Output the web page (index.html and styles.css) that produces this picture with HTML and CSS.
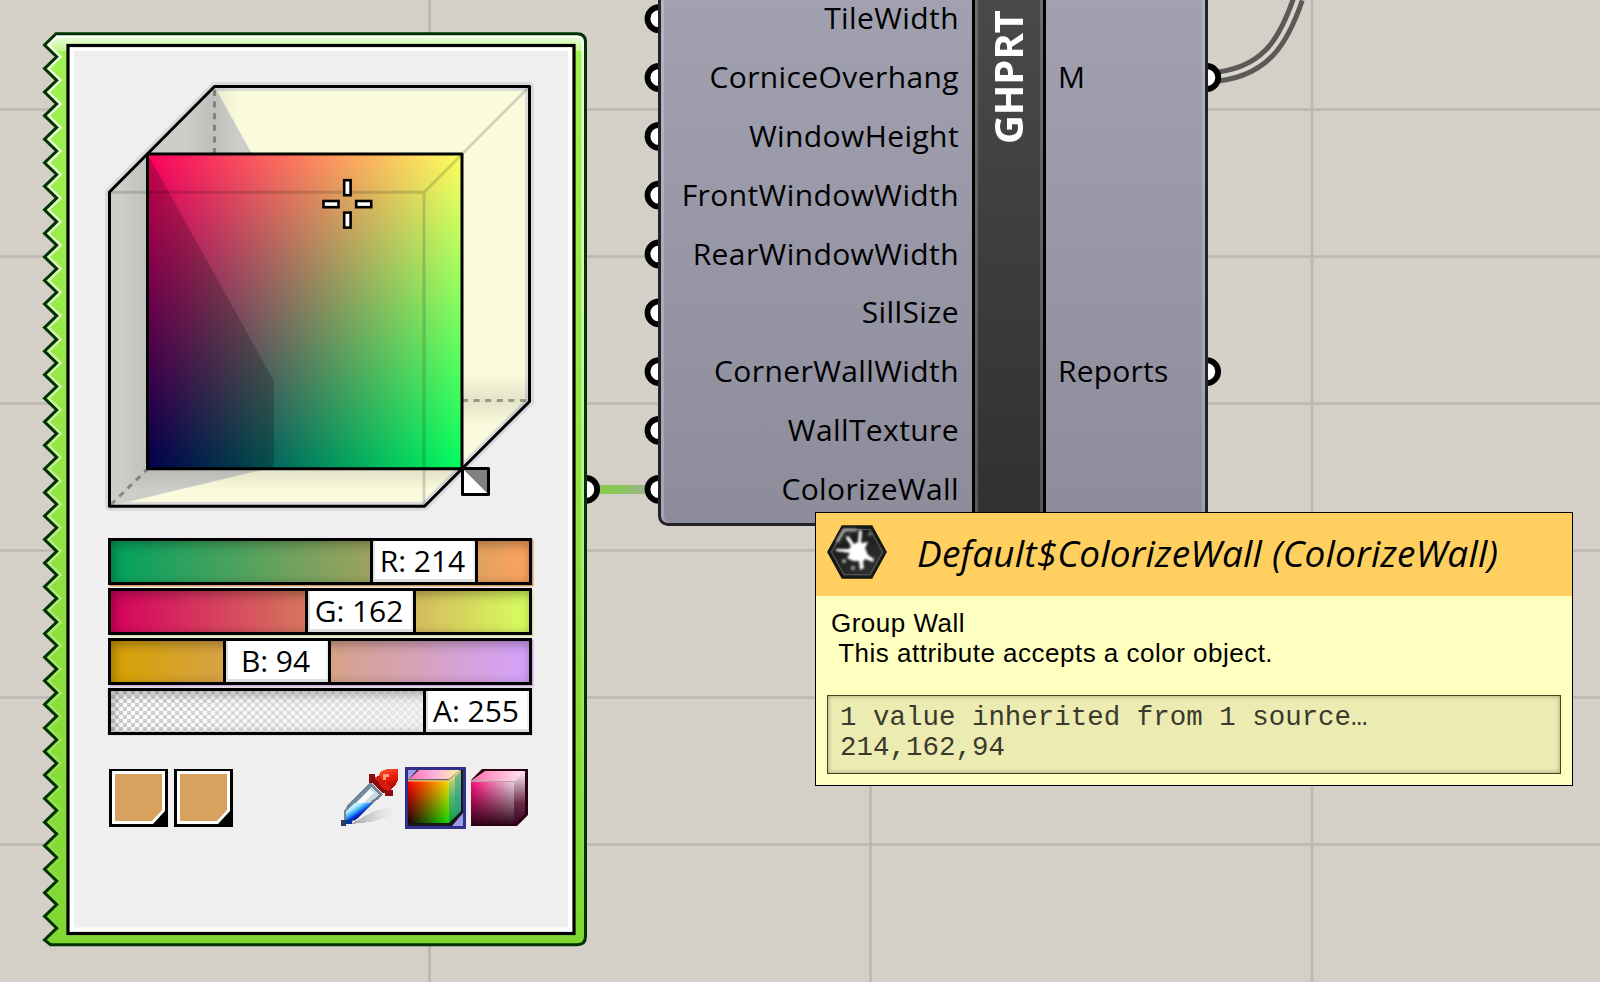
FILE: index.html
```html
<!DOCTYPE html>
<html lang="en">
<head>
<meta charset="utf-8">
<title>Colour picker canvas</title>
<link rel="stylesheet" href="styles.css">
</head>
<body>
<main class="canvas">
  <svg class="wires" viewBox="0 0 1600 982" width="1600" height="982">
    <defs>
      <linearGradient id="wire" x1="600" x2="645" gradientUnits="userSpaceOnUse"><stop offset="0" stop-color="#88c94a"/><stop offset=".5" stop-color="#8cc45c"/><stop offset="1" stop-color="#9cb58c"/></linearGradient>
    </defs>
    <path class="grid" d="M0 109.5H1600M0 256.5H1600M0 403.5H1600M0 550.5H1600M0 697.5H1600M0 844.5H1600M429.5 0V982M870.5 0V982M1312 0V982"/>
    <rect x="590" y="485" width="62" height="9" fill="url(#wire)"/>
    <path class="wire-outer" d="M1207 77.5C1266 75 1284 40 1298 -1"/>
    <path class="wire-inner" d="M1207 77.5C1266 75 1284 40 1298 -1"/>
    <g class="ports">
      <circle cx="659" cy="18.7" r="11.5"/><circle cx="659" cy="77.5" r="11.5"/><circle cx="659" cy="136.3" r="11.5"/>
      <circle cx="659" cy="195.1" r="11.5"/><circle cx="659" cy="254" r="11.5"/><circle cx="659" cy="312.8" r="11.5"/>
      <circle cx="659" cy="371.6" r="11.5"/><circle cx="659" cy="430.4" r="11.5"/><circle cx="659" cy="489.3" r="11.5"/>
      <circle cx="1206.7" cy="77.5" r="11.5"/><circle cx="1206.7" cy="371.6" r="11.5"/><circle cx="585.7" cy="489.3" r="11.5"/>
    </g>
  </svg>

  <section class="picker">
    <svg class="picker-frame" viewBox="42 30 547 918" width="547" height="918">
      <defs>
        <linearGradient id="green" x1="0" x2="0" y1="34" y2="945" gradientUnits="userSpaceOnUse"><stop offset="0" stop-color="#9ff250"/><stop offset=".5" stop-color="#92e543"/><stop offset="1" stop-color="#80d732"/></linearGradient>
        <linearGradient id="gloss" x1="0" x2="0" y1="34" y2="51" gradientUnits="userSpaceOnUse"><stop offset="0" stop-color="#fff" stop-opacity=".9"/><stop offset="1" stop-color="#fff" stop-opacity=".35"/></linearGradient>
        <linearGradient id="rim" x1="0" x2="0" y1="34" y2="945" gradientUnits="userSpaceOnUse"><stop offset="0" stop-color="#fff" stop-opacity=".85"/><stop offset="1" stop-color="#fff" stop-opacity="0"/></linearGradient>
        <clipPath id="shell"><path id="shell-path" d=""/></clipPath>
      </defs>
      <path class="shell" fill="url(#green)"/>
      <g clip-path="url(#shell)">
        <rect x="42" y="33" width="547" height="18" fill="url(#gloss)"/>
        <path class="shell" fill="none" stroke="url(#rim)" stroke-width="8"/>
      </g>
      <path class="shell" fill="none" stroke="#003300" stroke-width="3"/>
      <rect x="68" y="45.5" width="506" height="888" fill="#fff" stroke="#000" stroke-width="3.2"/>
      <rect x="74" y="51" width="494" height="876.5" fill="#efefef"/>
    </svg>

    <svg class="cube" viewBox="104 80 432 432" width="432" height="432">
      <defs>
        <linearGradient id="face-g"><stop offset="0" stop-color="#00005e"/><stop offset="1" stop-color="#00ff5e"/></linearGradient>
        <linearGradient id="face-r" x1="0" x2="0" y1="0" y2="1"><stop offset="0" stop-color="#f00"/><stop offset="1" stop-color="#000"/></linearGradient>
        <linearGradient id="shade-x" x1="120" x2="147" gradientUnits="userSpaceOnUse"><stop offset="0" stop-color="#000" stop-opacity="0"/><stop offset="1" stop-color="#000" stop-opacity=".06"/></linearGradient>
        <linearGradient id="shade-b" x1="0" x2="0" y1="469" y2="490" gradientUnits="userSpaceOnUse"><stop offset="0" stop-color="#000" stop-opacity=".1"/><stop offset="1" stop-color="#000" stop-opacity="0"/></linearGradient>
        <linearGradient id="shade-r" x1="0" x2="0" y1="375" y2="426" gradientUnits="userSpaceOnUse"><stop offset="0" stop-color="#000" stop-opacity="0"/><stop offset=".5" stop-color="#000" stop-opacity=".09"/><stop offset="1" stop-color="#000" stop-opacity="0"/></linearGradient>
        <linearGradient id="shade-t" x1="185" x2="240" gradientUnits="userSpaceOnUse"><stop offset="0" stop-color="#000" stop-opacity="0"/><stop offset=".5" stop-color="#000" stop-opacity=".07"/><stop offset="1" stop-color="#000" stop-opacity="0"/></linearGradient>
      </defs>
      <path d="M214.5 86.5H529.5V401.5L424.5 506.3H109.5V192Z" fill="#fafadc" stroke="#dadada" stroke-width="9" stroke-linejoin="round"/>
      <path d="M214.5 86.5L252 154H147.5V469H265L109.5 506.3V192Z" fill="#cdcdca"/>
      <path d="M110 192L147.5 154V469L110 506Z" fill="url(#shade-x)"/>
      <path d="M147 469H461L424 506H110Z" fill="url(#shade-b)"/>
      <path d="M462 345H529V401L462 467Z" fill="url(#shade-r)"/>
      <path d="M180 120L214.5 86.5H245V154H180Z" fill="url(#shade-t)"/>
      <g class="blend">
        <rect x="147.5" y="154" width="314.5" height="314.7" fill="url(#face-g)"/>
        <rect class="screen" x="147.5" y="154" width="314.5" height="314.7" fill="url(#face-r)"/>
      </g>
      <path d="M147.5 154L274 381V468.7H147.5Z" fill="#000" fill-opacity=".2"/>
      <path class="ghost" d="M110 192.3H424V505M424 192.3L528.5 87.5"/>
      <path class="dashes" d="M214.5 90V153M462 400.5H528M111 504.5L147 469.5"/>
      <path class="edge" d="M214.5 86.5H529.5V401.5L424.5 506.3H109.5V192Z"/>
      <rect class="edge" x="147.5" y="154" width="314.5" height="314.7"/>
      <g class="cross"><rect x="344.2" y="180.2" width="6.4" height="15"/><rect x="344.2" y="212.6" width="6.4" height="15"/><rect x="323.5" y="201" width="15" height="6.2"/><rect x="356.2" y="201" width="15" height="6.2"/></g>
      <path d="M462.5 468.5H488.5V494.5H462.5Z" fill="#fff"/>
      <path d="M462.5 468.5H488.5V494.5Z" fill="#808080"/>
      <path class="edge" d="M462.5 468.5H488.5V494.5H462.5Z"/>
    </svg>

    <div class="sliders">
      <div class="slider red"><span class="value" style="left:262px;width:108px">R: 214</span></div>
      <div class="slider green"><span class="value" style="left:197px;width:111px">G: 162</span></div>
      <div class="slider blue"><span class="value" style="left:115px;width:108px">B: 94</span></div>
      <div class="slider alpha"><span class="value" style="left:315px;width:109px">A: 255</span></div>
    </div>

    <div class="tools">
      <svg class="swatch" viewBox="0 0 59 58" width="59" height="58"><path d="M0 0H59V58H0Z"/><path d="M3 2H56V42L44 55H3Z" fill="#fff"/><path d="M6 5H53V41L43 52H6Z" fill="#d6a25e"/></svg>
      <svg class="swatch" viewBox="0 0 59 58" width="59" height="58"><path d="M0 0H59V58H0Z"/><path d="M3 2H56V42L44 55H3Z" fill="#fff"/><path d="M6 5H53V41L43 52H6Z" fill="#d6a25e"/></svg>
      <svg class="dropper" viewBox="0 0 58 58" width="58" height="58" shape-rendering="crispEdges">
        <defs>
          <linearGradient id="cast"><stop offset="0" stop-color="#888" stop-opacity=".8"/><stop offset="1" stop-color="#ccc" stop-opacity="0"/></linearGradient>
          <linearGradient id="bulb" x1=".3" y1="0" x2=".8" y2="1"><stop offset="0" stop-color="#ff5a38"/><stop offset=".5" stop-color="#e81c08"/><stop offset="1" stop-color="#8e0808"/></linearGradient>
          <linearGradient id="ink" x1=".25" y1=".3" x2=".65" y2=".7"><stop offset="0" stop-color="#bff0ff"/><stop offset=".4" stop-color="#32a8f8"/><stop offset=".75" stop-color="#0828d8"/><stop offset="1" stop-color="#001890"/></linearGradient>
        </defs>
        <path d="M10 55L33 42L52 38L54 46L30 53Z" fill="url(#cast)"/>
        <path d="M30 13L42 26L29 37L16 50L9 55H3V42L8 34Z" fill="#74889a"/>
        <path d="M30 18L38 26L28 34H15Z" fill="#cfdcde"/>
        <path d="M29 20L33 23L22 34H15Z" fill="#f4fbfb"/>
        <path d="M13 34H31L14 51H5V42Z" fill="url(#ink)"/>
        <path d="M0 51H5V57H0Z" fill="#26405a"/><path d="M5 51H11V55H5Z" fill="#063b9c"/>
        <path d="M28 5H34V8H37L40 2L47 0H57V11L54 17L49 21L46 22L37 17L31 14H28Z" fill="url(#bulb)"/>
        <path d="M28 5H34V10L38 14L43 19L48 21H52V27H44V24H41L34 17L31 14H28Z" fill="#8c0b0b"/>
        <path d="M34 8L38 7L50 19L47 22L42 20Z" fill="#d81a0a"/>
        <path d="M42 5H48V8H45V11H42Z" fill="#ff9a80"/>
      </svg>
      <svg class="mode-rgb" viewBox="0 0 61 62" width="61" height="62">
        <defs>
          <linearGradient id="c1"><stop offset="0" stop-color="#100"/><stop offset="1" stop-color="#00d800"/></linearGradient>
          <linearGradient id="c1r" x1="0" x2="0" y1="0" y2="1"><stop offset="0" stop-color="#f00"/><stop offset="1" stop-color="#100"/></linearGradient>
          <linearGradient id="c2"><stop offset="0" stop-color="#ff70b8"/><stop offset=".5" stop-color="#ffb0dc"/><stop offset="1" stop-color="#fff4a0"/></linearGradient>
          <linearGradient id="c3" x1="0" x2="0" y1="0" y2="1"><stop offset="0" stop-color="#f4e070"/><stop offset=".5" stop-color="#58b868"/><stop offset="1" stop-color="#10a030"/></linearGradient>
        </defs>
        <rect x="1.5" y="1.5" width="58" height="59" fill="#9c9ce8" stroke="#30308c" stroke-width="3"/>
        <path d="M3 13L12 3H58V46L47 59H3Z" fill="#181818"/>
        <path d="M4 12L14 3H55L44 12Z" fill="url(#c2)"/>
        <path d="M44 14L56 3V44L44 56Z" fill="url(#c3)"/><path d="M50 9L56 3V44L50 50Z" fill="#2898a8" opacity=".55"/>
        <g class="blend"><path d="M3 14H44V56H3Z" fill="url(#c1)"/><path class="screen" d="M3 14H44V56H3Z" fill="url(#c1r)"/></g>
        <path d="M3 13.5H44L55 4" fill="none" stroke="#ffe8a0" stroke-width="2" opacity=".75"/>
      </svg>
      <svg class="mode-hsv" viewBox="0 0 57 58" width="57" height="58">
        <defs>
          <linearGradient id="h1"><stop offset="0" stop-color="#ff0a7c"/><stop offset="1" stop-color="#e6d6de"/></linearGradient>
          <linearGradient id="h2" x1="0" x2="0" y1="0" y2="1"><stop offset="0" stop-color="#2a0014" stop-opacity="0"/><stop offset="1" stop-color="#2a0014"/></linearGradient>
          <linearGradient id="h3" x1="0" x2="0" y1="0" y2="1"><stop offset="0" stop-color="#fff0f6"/><stop offset=".6" stop-color="#6a2848"/><stop offset="1" stop-color="#3a0420"/></linearGradient>
          <linearGradient id="h4"><stop offset="0" stop-color="#ff70ac"/><stop offset="1" stop-color="#ffe8f2"/></linearGradient>
        </defs>
        <path d="M0 11L11 0H57V46L46 57H0Z" fill="#280012"/>
        <path d="M1 11L14 2H54L43 12Z" fill="url(#h4)"/>
        <path d="M43 12L54 2V45L43 56Z" fill="url(#h3)"/>
        <path d="M0 13H43V55H0Z" fill="url(#h1)"/><path d="M0 13H43V57H0Z" fill="url(#h2)"/>
        <path d="M0 12H43L54 3" fill="none" stroke="#ffd8e8" stroke-width="2" opacity=".7"/>
      </svg>
    </div>
  </section>

  <section class="component">
    <div class="inputs">
      <span>TileWidth</span><span>CorniceOverhang</span><span>WindowHeight</span><span>FrontWindowWidth</span><span>RearWindowWidth</span><span>SillSize</span><span>CornerWallWidth</span><span>WallTexture</span><span>ColorizeWall</span>
    </div>
    <div class="name"><b>GHPRT</b></div>
    <div class="outputs"><span>M</span><span>Reports</span></div>
  </section>

  <aside class="tooltip">
    <header>
      <svg viewBox="0 0 60 54" width="60" height="54">
        <defs><linearGradient id="hex" x1="0" y1="0" x2=".8" y2="1"><stop offset="0" stop-color="#555"/><stop offset=".35" stop-color="#1c1c1c"/><stop offset="1" stop-color="#333"/></linearGradient><filter id="soft"><feGaussianBlur stdDeviation=".9"/></filter></defs>
        <path d="M15.5 1.5H44.5L58.5 27L44.5 52.5H15.5L1.5 27Z" fill="url(#hex)" stroke="#161616" stroke-width="2.5"/>
        <path d="M17 4.5H43L55.5 27L43 49.5H17L4.5 27Z" fill="none" stroke="#555" stroke-width="1.2"/>
        <g filter="url(#soft)">
          <path d="M10 17L17 5H30" fill="none" stroke="#aaa" stroke-width="2.5"/>
          <path d="M19 13Q20 9 23 13L27 19L31 17L32 5L35 6L34 18L41 17L38 23L41 30L47 34L46 37L38 34L36 37L37 43L33 45L32 36L26 36L20 33L23 28L9 26V24L22 24L24 21Z" fill="#fff"/>
          <circle cx="17" cy="36" r="2" fill="#aaa"/><circle cx="26" cy="43" r="2.2" fill="#999"/><circle cx="43" cy="9" r="2" fill="#777"/>
        </g>
      </svg>
      <h1>Default$ColorizeWall (ColorizeWall)</h1>
    </header>
    <p class="description">Group Wall
 This attribute accepts a color object.</p>
    <pre class="data">1 value inherited from 1 source…
214,162,94</pre>
  </aside>
</main>
<script src="frame.js"></script>
</body>
</html>
```
FILE: frame.js
```js
// Builds the torn-edge outline of the picker: 38 teeth down the left side.
(() => {
  const teeth = 38;
  const firstTooth = 45;
  const pitch = 23.55;
  let d = 'M56 33.7H577Q585.5 33.7 585.5 42V936.5Q585.5 944.7 577 944.7H50.5L44.5 ' + (firstTooth + teeth * pitch);
  for (let i = teeth - 1; i >= 0; i--) {
    d += `L56.7 ${firstTooth + (i + 0.5) * pitch}L44.5 ${firstTooth + i * pitch}`;
  }
  d += 'Z';
  document.getElementById('shell-path').setAttribute('d', d);
  document.querySelectorAll('.shell').forEach(p => p.setAttribute('d', d));
})();
```
FILE: styles.css
```css
* { box-sizing: border-box; }
body { margin: 0; }
.canvas {
  position: relative;
  width: 1600px;
  height: 982px;
  overflow: hidden;
  background: #d4d0c8;
  color: #000;
  font-family: "Open Sans", "Noto Sans", sans-serif;
}
svg { display: block; flex: none; }
.wires { position: absolute; inset: 0; }
.grid { stroke: #bcb8b1; stroke-width: 2.6; }
.wire-outer { fill: none; stroke: #5b5955; stroke-width: 14; }
.wire-inner { fill: none; stroke: #d8d5cf; stroke-width: 4; }
.ports circle { fill: #fff; stroke: #000; stroke-width: 5.8; }

.picker {
  position: absolute;
  left: 42px;
  top: 30px;
  width: 547px;
  height: 918px;
  padding: 50px 0 0 62px;
}
.picker-frame { position: absolute; inset: 0; }
.picker > :not(.picker-frame) { position: relative; }
.blend { isolation: isolate; }
.screen { mix-blend-mode: screen; }
.edge { fill: none; stroke: #000; stroke-width: 3; stroke-linejoin: round; }
.ghost { fill: none; stroke: #000; stroke-opacity: .15; stroke-width: 3; }
.dashes { fill: none; stroke: #000; stroke-opacity: .33; stroke-width: 3; stroke-dasharray: 6 5.6; }
.cross rect { fill: #fff; stroke: #000; stroke-width: 2.6; }

.sliders { display: flex; flex-direction: column; gap: 3px; margin: 26px 0 0 4px; width: 424px; }
.slider { position: relative; height: 47px; border: 3px solid #000; box-shadow: 0 0 1px #0006; }
.slider::before { content: ""; position: absolute; inset: 0; box-shadow: inset 2px 3px 12px #0005; }
.red { background: linear-gradient(90deg, #00a25e, #ffa25e); box-shadow: 1.5px 1.5px 0 #d49a62; }
.green { background: linear-gradient(90deg, #d6005e, #d6ff5e); box-shadow: 1.5px 1.5px 0 #d3e0a0; }
.blue { background: linear-gradient(90deg, #d6a200, #d6a2ff); box-shadow: 1.5px 1.5px 0 #c8aadd; }
.alpha { background: linear-gradient(90deg, #efefef00, #efefef), repeating-conic-gradient(#ccc 0 25%, #fff 0 50%) 0 0 / 8px 8px; }
.value {
  position: absolute;
  top: 0;
  margin-left: -3px;
  height: 41px;
  padding-right: 3px;
  border: solid #000;
  border-width: 0 3px;
  background: #fff;
  box-shadow: inset 2px -3px 0 #dedede, inset -2px 0 0 #eee;
  font-size: 30px;
  line-height: 39px;
  letter-spacing: -.05px;
  text-align: center;
  white-space: nowrap;
}

.tools { display: flex; align-items: center; margin: 32px 0 0 5px; height: 62px; }
.swatch { margin-right: 6px; }
.dropper { margin-left: 102px; }
.mode-rgb { margin-left: 6px; }
.mode-hsv { margin-left: 5px; }

.component {
  position: absolute;
  left: 658px;
  top: -13.7px;
  width: 550px;
  height: 539.7px;
  display: flex;
  border: 3px solid #242428;
  border-radius: 10px;
  background: linear-gradient(#a1a1b1, #8c8c9b);
  box-shadow: inset 3px 0 0 #ffffff38, inset -3px 0 0 #ffffff30;
  font-size: 30px;
  line-height: 58.8px;
  letter-spacing: .4px;
}
.inputs { width: 311px; padding-right: 13px; display: flex; flex-direction: column; align-items: flex-end; }
.inputs span, .outputs span { display: block; height: 58.8px; }
.name {
  width: 74px;
  border: solid #000;
  border-width: 0 3px;
  background: linear-gradient(#4a4a4a, #303030);
  box-shadow: inset 3px 0 0 #ffffff30, inset -3px 0 0 #ffffff30;
}
.name b {
  display: block;
  writing-mode: vertical-rl;
  transform: rotate(180deg);
  width: 65px;
  height: 134px;
  margin-top: 21px;
  color: #fff;
  font-size: 40px;
  line-height: 65px;
  letter-spacing: -.1px;
  white-space: nowrap;
}
.outputs { padding: 58.8px 0 0 12px; display: flex; flex-direction: column; gap: 235.2px; letter-spacing: .2px; }

.tooltip {
  position: absolute;
  left: 815px;
  top: 512px;
  width: 758px;
  height: 274px;
  border: 1px solid #000;
  background: #ffffc0;
}
.tooltip header { display: flex; align-items: flex-start; height: 83px; padding: 12px 0 0 11px; background: #ffd060; }
.tooltip h1 {
  margin: 1px 0 0 30px;
  font-size: 37px;
  font-style: italic;
  font-weight: 400;
  line-height: 54px;
  letter-spacing: .18px;
  white-space: nowrap;
}
.description {
  margin: 12px 0 0 15px;
  height: 60px;
  font: 26px/30px "Liberation Sans", Arial, sans-serif;
  letter-spacing: .49px;
  white-space: pre;
}
.data {
  margin: 27px 11px 0;
  height: 79px;
  padding: 7px 0 0 12px;
  border: 1px solid #45451f;
  background: #ebebb2;
  box-shadow: inset 0 0 5px #0005;
  color: #3a3a2c;
  font: 27.4px/30px "Liberation Mono", "Courier New", monospace;
  letter-spacing: .05px;
}
```
